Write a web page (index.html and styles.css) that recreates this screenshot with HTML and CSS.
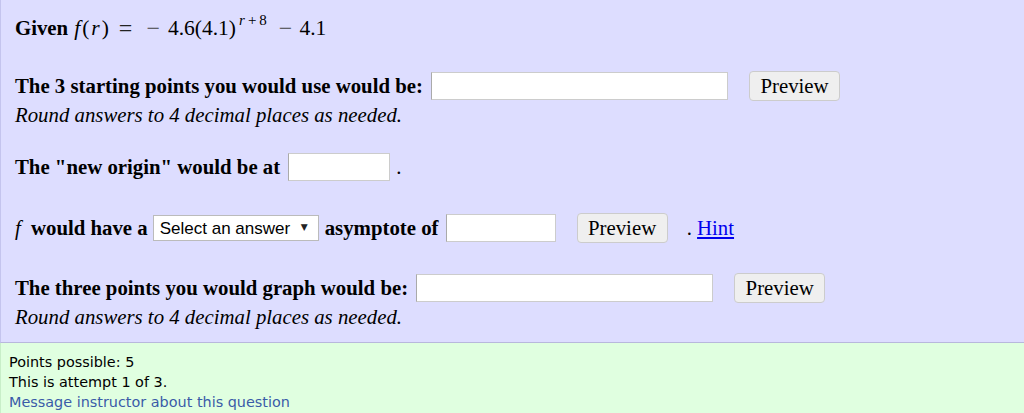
FILE: index.html
```html
<!DOCTYPE html>
<html lang="en">
  <head>
    <meta charset="UTF-8" />
    <title>Question</title>
    <link rel="stylesheet" href="styles.css">
  </head>
  <body>
    <div class="question">
      <div class="row given">
        <span>Given</span>
        <span class="math">
          <span class="fr"><i>f</i>(<i>r</i>)</span><span class="op eq">=</span><span class="op neg">−</span><span class="num">4.6(4.1)</span><sup><i>r</i><span class="plus">+</span>8</sup><span class="op sub">−</span><span class="num">4.1</span>
        </span>
      </div>

      <div class="row first">
        <span>The 3 starting points you would use would be:</span>
        <input type="text" class="wide">
        <button class="preview">Preview</button>
      </div>
      <div class="note">Round answers to 4 decimal places as needed.</div>

      <div class="row second">
        <span>The "new origin" would be at</span>
        <input type="text" class="small">
        <span class="dot">.</span>
      </div>

      <div class="row third">
        <span><i class="fn">f</i> would have a</span>
        <span class="select-wrap">
          <select class="answer">
            <option>Select an answer</option>
          </select>
        </span>
        <span>asymptote of</span>
        <input type="text" class="mid">
        <button class="preview">Preview</button>
        <span class="hint">. <a href="#">Hint</a></span>
      </div>

      <div class="row fourth">
        <span>The three points you would graph would be:</span>
        <input type="text" class="wide">
        <button class="preview">Preview</button>
      </div>
      <div class="note">Round answers to 4 decimal places as needed.</div>
    </div>

    <div class="info">
      <div>Points possible: 5</div>
      <div>This is attempt 1 of 3.</div>
      <a href="#">Message instructor about this question</a>
    </div>
  </body>
</html>
```

FILE: styles.css
```css
html,
body {
  margin: 0;
  padding: 0;
  height: 100%;
  overflow: hidden;
}

body {
  background: #e0ffe0;
  font-family: "Liberation Serif", "Times New Roman", serif;
  color: #000;
}

.question {
  background: #ddddff;
  border-left: 1px solid #c4c4ee;
  border-bottom: 1px solid #b8b8dc;
  padding: 13px 0 11px 14px;
  font-size: 20.8px;
  font-weight: bold;
}

.row {
  display: flex;
  align-items: center;
  height: 30px;
  white-space: nowrap;
}

.first {
  margin-top: 28px;
}

.second {
  margin-top: 23px;
}

.third {
  margin-top: 31px;
}

.fourth {
  margin-top: 30px;
}

.note {
  font-style: italic;
  font-weight: normal;
  height: 28px;
  line-height: 28px;
}

/* Math line */
.math {
  font-weight: normal;
  font-size: 21.5px;
  margin-left: 6px;
}

.math i {
  font-style: italic;
}

.fr {
  letter-spacing: 2px;
}

.math .op {
  display: inline-block;
  font-size: 24px;
}

.math .eq {
  margin: 0 14px 0 8px;
  color: #222;
}

.math .neg {
  margin-right: 8px;
  color: #444;
}

.math .sub {
  margin: 0 7px 0 12px;
  color: #444;
}

.math sup {
  font-size: 15px;
  position: relative;
  top: -2px;
  margin-left: 3px;
}

.plus {
  margin: 0 3px;
}

.fn {
  font-weight: normal;
  margin-right: 5px;
}

input[type="text"] {
  box-sizing: border-box;
  height: 28px;
  border: 1px solid #ccc;
  border-left-color: #aaa;
  background: #fff;
  padding: 0 4px;
  font-size: 16px;
}

.wide {
  width: 297px;
  margin-left: 8px;
}

.small {
  width: 102px;
  margin-left: 8px;
}

.mid {
  width: 110px;
  margin-left: 7px;
}

.dot {
  font-weight: normal;
  margin-left: 6px;
}

.preview {
  box-sizing: border-box;
  height: 30px;
  margin-left: 21px;
  padding: 0 10.5px;
  background: #efefef;
  border: 1px solid #ccc;
  border-radius: 4px;
  font-family: "Liberation Serif", "Times New Roman", serif;
  font-size: 20.8px;
  color: #000;
}

.third .preview {
  margin-left: 21px;
}

.select-wrap {
  position: relative;
  margin: 0 6px 0 5px;
}

.select-wrap::after {
  content: "▼";
  position: absolute;
  right: 11px;
  top: 7px;
  font-family: "DejaVu Sans", sans-serif;
  font-size: 9px;
  color: #222;
  pointer-events: none;
}

.answer {
  appearance: none;
  -webkit-appearance: none;
  box-sizing: border-box;
  display: block;
  height: 26px;
  width: 166px;
  padding: 0 0 0 6px;
  border: 1px solid #bbb;
  border-radius: 0;
  background: #fff;
  font-family: "Liberation Sans", Arial, sans-serif;
  font-size: 17px;
  color: #000;
}

.hint {
  font-weight: normal;
  margin-left: 19px;
}

.hint a {
  color: #0000ee;
}

/* Info box */
.info {
  padding: 9px 8px 7px;
  font-family: "DejaVu Sans", Verdana, sans-serif;
  font-size: 14.4px;
  line-height: 20px;
  border-left: 1px solid #c8eec8;
}

.info a {
  color: #3a5ba8;
  text-decoration: none;
}
```
